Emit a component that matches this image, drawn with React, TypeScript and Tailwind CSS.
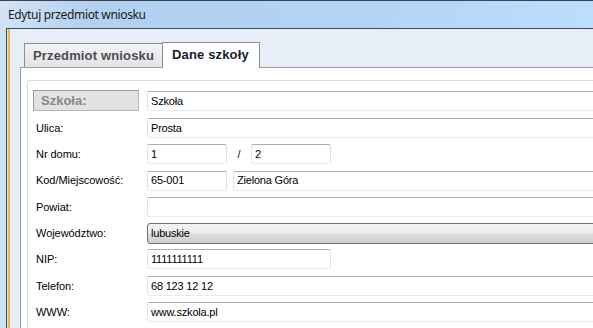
import * as React from "react";

/*
 * "Edytuj przedmiot wniosku" — Win7 dialog, school details tab.
 * The window is cropped on the right and bottom, so inputs run past the edge.
 */

const sans = "font-['Liberation_Sans',Arial,sans-serif]";

function TextBox({ value, className }: { value?: string; className?: string }) {
  return (
    <div
      className={`flex h-[20px] shrink-0 items-center rounded-[2px] border border-t-[#abadb3] border-r-[#dbdfe6] border-b-[#e3e9ef] border-l-[#e2e3ea] bg-white pl-[3px] text-[11px] tracking-[-0.2px] text-black ${className ?? ""}`}
    >
      {value}
    </div>
  );
}

function ComboBox({ value }: { value: string }) {
  return (
    <div className="flex h-[21px] w-[470px] shrink-0 items-center rounded-[3px] border border-[#707070] bg-[linear-gradient(#f3f3f3_0%,#ebebeb_48%,#dddddd_52%,#cfcfcf_100%)] pl-[3px] text-[11px] tracking-[-0.2px] text-black">
      {value}
    </div>
  );
}

function Row({ label, children }: { label: string; children: React.ReactNode }) {
  return (
    <div className="flex h-[20px] items-center">
      <span className="w-[114px] shrink-0 pl-[3px] text-[11px] tracking-[-0.05px] text-black">
        {label}
      </span>
      {children}
    </div>
  );
}

export default function App() {
  return (
    <div className={`flex h-[328px] w-[593px] flex-col overflow-hidden ${sans}`}>
      {/* title bar */}
      <div className="flex h-[28px] shrink-0 items-center border-t border-[#3b4350] bg-[linear-gradient(100deg,#d4e4f5_0%,#b3d0ef_15%,#b2d3f4_60%,#bcdefd_100%)] pl-[8px]">
        <span className="font-['Noto_Sans',sans-serif] text-[12px] tracking-[-0.35px] text-[#1b1b1b]">
          Edytuj przedmiot wniosku
        </span>
      </div>

      <div className="flex min-h-0 flex-1 bg-[#cddff2] pl-[6px]">
        <div className="flex flex-1 border-t border-l border-[#3e4e62] pl-[1px]">
          <div className="flex flex-1 flex-col border-l-2 border-[#f3b34b] bg-[#e8eef7] pt-[13px] pl-[10px]">
            {/* tab strip */}
            <div className="flex items-end pl-[4px]">
              <div className="flex h-[24px] w-[138px] items-center border-t border-l border-[#8d9095] bg-[linear-gradient(#f3f3f3,#e3e3e3)] pl-[8px] text-[13px] font-bold tracking-[0.15px] text-[#4a4b58]">
                Przedmiot wniosku
              </div>
              <div className="relative z-10 -mb-px flex h-[26px] w-[98px] items-center border-x border-t border-[#8d9095] bg-white pb-[2px] pl-[9px] text-[13px] font-bold tracking-[0.15px] text-[#1a1b2e]">
                Dane szkoły
              </div>
            </div>

            {/* tab page */}
            <div className="flex flex-1 flex-col border-t border-l border-[#9a9da3] bg-white pt-[12px] pl-[6px]">
              <div className="flex flex-1 flex-col rounded-tl-[3px] border-t border-l border-[#d6dce5] pt-[9px] pl-[5px]">
                <div className="flex h-[21px] items-start">
                  <div className="flex h-[21px] w-[106px] shrink-0 items-center border border-t-[#9c9c9c] border-r-[#b5b5b5] border-b-[#b5b5b5] border-l-[#9c9c9c] bg-[#e2e2e2] pl-[7px] text-[13px] font-bold text-[#878787]">
                    Szkoła:
                  </div>
                  <TextBox value="Szkoła" className="mt-px ml-[8px] w-[470px]" />
                </div>

                <div className="mt-[7px] flex flex-col gap-[6.3px]">
                  <Row label="Ulica:">
                    <TextBox value="Prosta" className="w-[470px]" />
                  </Row>
                  <Row label="Nr domu:">
                    <TextBox value="1" className="w-[80px]" />
                    <span className="w-[24px] shrink-0 text-center text-[11px]">/</span>
                    <TextBox value="2" className="w-[80px]" />
                  </Row>
                  <Row label="Kod/Miejscowość:">
                    <TextBox value="65-001" className="w-[80px]" />
                    <TextBox value="Zielona Góra" className="ml-[6px] w-[400px]" />
                  </Row>
                  <Row label="Powiat:">
                    <TextBox className="w-[470px]" />
                  </Row>
                  <Row label="Województwo:">
                    <ComboBox value="lubuskie" />
                  </Row>
                  <Row label="NIP:">
                    <TextBox value="1111111111" className="w-[184px]" />
                  </Row>
                  <Row label="Telefon:">
                    <TextBox value="68 123 12 12" className="w-[470px]" />
                  </Row>
                  <Row label="WWW:">
                    <TextBox value="www.szkola.pl" className="w-[470px]" />
                  </Row>
                </div>
              </div>
            </div>
          </div>
        </div>
      </div>
    </div>
  );
}
